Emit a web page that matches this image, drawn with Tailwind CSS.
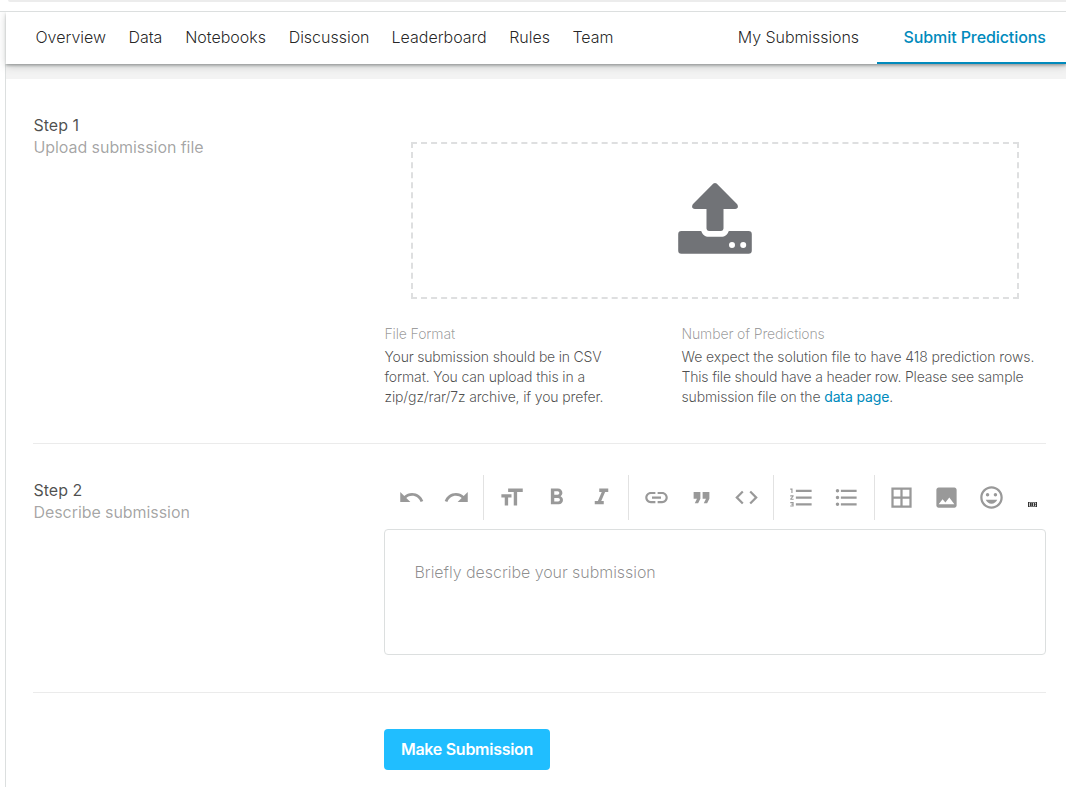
<!DOCTYPE html>
<html lang="en">
<head>
<meta charset="utf-8">
<title>Submit Predictions</title>
<script src="https://cdn.jsdelivr.net/npm/@tailwindcss/browser@4"></script>
</head>
<body class="h-[787px] overflow-hidden bg-white font-['Inter',sans-serif] font-light">
<div class="flex h-full flex-col">
  <div class="ml-2 h-[2px] shrink-0 rounded-bl bg-[#ececec]"></div>
  <div class="relative z-10 mt-[9px] h-px shrink-0 bg-[#dcdfdf]"></div>
  <div class="flex min-h-0 flex-1 flex-col pl-[5px] [clip-path:inset(0)]">
    <nav class="relative ml-px flex h-[52px] shrink-0 items-start bg-white pl-[29.500px] text-base leading-[51px] tracking-[-0.02px] text-black/87 shadow-[0_1px_0_rgba(60,64,67,0.06),0_2px_2px_rgba(60,68,67,0.28),0_2px_8px_rgba(60,68,67,0.26)]">
      <div class="flex gap-[22.500px]">
        <a>Overview</a><a>Data</a><a class="ml-[0.300px]">Notebooks</a><a class="ml-[0.300px]">Discussion</a><a class="-ml-[0.400px]">Leaderboard</a><a>Rules</a><a>Team</a>
      </div>
      <a class="ml-auto mr-[18px] tracking-[-0.07px]">My Submissions</a>
      <a class="h-[52px] w-[189px] border-b-2 border-[#008abc] pl-[26.500px] font-medium tracking-[-0.09px] text-[#008abc]">Submit Predictions</a>
    </nav>
    <main class="min-h-0 flex-1 border-l border-[#dcdfdf]">
      <div class="h-[15px] bg-[#f3f3f3]"></div>
      <div class="ml-[27px] mr-5">
        <section class="flex h-[365px] border-b border-[#ebebeb] pt-[35px]">
          <div class="w-[351px] pl-[0.500px] text-base leading-[22px]">
            <h2 class="font-normal text-black/70">Step 1</h2>
            <p class="font-normal tracking-[-0.070px] text-black/37">Upload submission file</p>
          </div>
          <div class="flex-1">
            <div class="mx-[27px] mt-7 flex h-[157px] justify-center border-2 border-dashed border-[#dedfe0] pt-[38px]">
              <svg class="h-[74px] w-[76px]" viewBox="677 182 76 74" fill="#717377">
                <path d="M713.4 183.6Q715 182.4 716.6 183.6L737.2 204.2Q739.4 208.4 735.2 209H723.5V228.6Q723.5 231 721.1 231H708.9Q706.5 231 706.5 228.6V209H694.8Q690.6 208.4 692.8 204.2Z"/>
                <path fill-rule="evenodd" d="M681.4 231H701.2C702.6 234.6 704.8 236.8 709 236.8H721C725.200 236.800 727.400 234.600 728.800 231H748.600Q751.800 231 751.800 234.200V250.600Q751.800 253.800 748.600 253.800H681.400Q678.200 253.800 678.200 250.600V234.200Q678.200 231 681.400 231ZM729 245a3 3 0 1 0 6 0a3 3 0 1 0-6 0ZM740.200 245a3 3 0 1 0 6 0a3 3 0 1 0-6 0Z"/>
              </svg>
            </div>
            <div class="flex pl-[0.500px] pt-[25px] text-sm leading-5 tracking-[-0.140px]">
              <div class="w-[297px]">
                <h3 class="mb-[3px] text-black/40">File Format</h3>
                <p class="text-black/70"><span class="tracking-[-0.200px]">Your submission should be in CSV</span><br>format. You can upload this in a<br>zip/gz/rar/7z archive, if you prefer.</p>
              </div>
              <div class="flex-1 whitespace-nowrap">
                <h3 class="mb-[3px] text-black/40">Number of Predictions</h3>
                <p class="text-black/70"><span class="tracking-[-0.090px]">We expect the solution file to have 418 prediction rows.</span><br><span class="tracking-[-0.190px]">This file should have a header row. Please see sample</span><br>submission file on the <a class="font-normal text-[#008abc]">data page</a>.</p>
              </div>
            </div>
          </div>
        </section>
        <section class="flex h-[249px] border-b border-[#ebebeb]">
          <div class="w-[351px] pl-[0.500px] pt-[35px] text-base leading-[22px]">
            <h2 class="font-normal text-black/70">Step 2</h2>
            <p class="font-normal tracking-[-0.070px] text-black/37">Describe submission</p>
          </div>
          <div class="flex-1 pt-[31px]">
            <div class="flex h-[45px] items-center pl-[4.500px] text-[#999] [&_svg]:mx-[9px] [&_svg]:size-[27px] [&_svg]:shrink-0 [&_svg]:fill-current">
              <svg viewBox="0 0 24 24"><path d="M12.500 8c-2.650 0-5.050.99-6.900 2.600L2 7v9h9l-3.620-3.620c1.390-1.160 3.160-1.880 5.120-1.880 3.540 0 6.550 2.310 7.600 5.500l2.370-.780C21.080 11.030 17.150 8 12.500 8z"/></svg>
              <svg viewBox="0 0 24 24"><path d="M18.400 10.600C16.550 8.990 14.150 8 11.500 8c-4.650 0-8.580 3.030-9.960 7.220L3.900 16c1.050-3.190 4.050-5.500 7.600-5.500 1.950 0 3.730.72 5.120 1.880L13 16h9V7l-3.600 3.600z"/></svg>
              <i class="ml-[4px] mr-[5px] h-full w-px bg-[#e2e2e2]"></i>
              <svg viewBox="0 0 24 24"><path d="M9 4v3h5v12h3V7h5V4H9zm-6 8h3v7h3v-7h3V9H3v3z"/></svg>
              <svg viewBox="0 0 24 24"><path d="M15.600 10.790c.97-.67 1.650-1.770 1.650-2.790 0-2.260-1.750-4-4-4H7v14h7.040c2.090 0 3.710-1.700 3.710-3.790 0-1.520-.86-2.820-2.150-3.420zM10 6.500h3c.83 0 1.500.67 1.500 1.500s-.67 1.500-1.500 1.500h-3v-3zm3.500 9H10v-3h3.500c.83 0 1.500.67 1.500 1.500s-.67 1.500-1.500 1.500z"/></svg>
              <svg viewBox="0 0 24 24"><path d="M10 4v3h2.210l-3.420 8H6v3h8v-3h-2.210l3.420-8H18V4z"/></svg>
              <i class="mx-[4.500px] h-full w-px bg-[#e2e2e2]"></i>
              <svg viewBox="0 0 24 24"><path d="M3.900 12c0-1.710 1.390-3.100 3.100-3.100h4V7H7c-2.760 0-5 2.240-5 5s2.240 5 5 5h4v-1.900H7c-1.710 0-3.100-1.390-3.100-3.100zM8 13h8v-2H8v2zm9-6h-4v1.900h4c1.710 0 3.100 1.390 3.100 3.100s-1.390 3.100-3.100 3.100h-4V17h4c2.760 0 5-2.240 5-5s-2.240-5-5-5z"/></svg>
              <svg viewBox="0 0 24 24"><path d="M6 17h3l2-4V7H5v6h3zm8 0h3l2-4V7h-6v6h3z"/></svg>
              <svg viewBox="0 0 24 24"><path d="M9.400 16.600L4.800 12l4.600-4.600L8 6l-6 6 6 6 1.400-1.400zm5.200 0l4.600-4.600-4.600-4.600L16 6l6 6-6 6-1.400-1.400z"/></svg>
              <i class="mx-[4.500px] h-full w-px bg-[#e2e2e2]"></i>
              <svg viewBox="0 0 24 24"><path d="M2 17h2v.5H3v1h1v.5H2v1h3v-4H2v1zm1-9h1V4H2v1h1v3zm-1 3h1.800L2 13.100v.9h3v-1H3.200L5 10.900V10H2v1zm5-6v2h14V5H7zm0 14h14v-2H7v2zm0-6h14v-2H7v2z"/></svg>
              <svg viewBox="0 0 24 24"><path d="M4 10.500c-.83 0-1.500.67-1.500 1.500s.67 1.500 1.500 1.500 1.500-.67 1.500-1.500-.67-1.500-1.500-1.500zm0-6c-.83 0-1.500.67-1.500 1.500S3.170 7.500 4 7.500 5.500 6.830 5.500 6 4.830 4.500 4 4.500zm0 12c-.83 0-1.500.68-1.500 1.500s.68 1.500 1.500 1.500 1.500-.68 1.500-1.500-.67-1.500-1.500-1.500zM7 19h14v-2H7v2zm0-6h14v-2H7v2zm0-8v2h14V5H7z"/></svg>
              <i class="ml-[5px] mr-[4px] h-full w-px bg-[#e2e2e2]"></i>
              <svg viewBox="0 0 24 24"><path d="M3 3v18h18V3H3zm8 16H5v-6h6v6zm0-8H5V5h6v6zm8 8h-6v-6h6v6zm0-8h-6V5h6v6z"/></svg>
              <svg viewBox="0 0 24 24"><path d="M21 19V5c0-1.100-.9-2-2-2H5c-1.100 0-2 .9-2 2v14c0 1.100.9 2 2 2h14c1.100 0 2-.9 2-2zM8.500 13.500l2.500 3.010L14.500 12l4.500 6H5l3.500-4.500z"/></svg>
              <svg viewBox="0 0 24 24"><path d="M11.990 2C6.470 2 2 6.480 2 12s4.470 10 9.990 10C17.520 22 22 17.520 22 12S17.520 2 11.990 2zM12 20c-4.420 0-8-3.580-8-8s3.580-8 8-8 8 3.580 8 8-3.580 8-8 8zm3.500-9c.83 0 1.500-.67 1.500-1.500S16.330 8 15.500 8 14 8.670 14 9.500s.67 1.500 1.500 1.500zm-7 0c.83 0 1.500-.67 1.500-1.500S9.330 8 8.500 8 7 8.670 7 9.500 7.670 11 8.500 11zm3.500 6.500c2.330 0 4.310-1.460 5.110-3.500H6.890c.8 2.040 2.780 3.500 5.110 3.500z"/></svg>
              <span class="ml-[14px] mt-[14px] flex h-[5px] w-[9px] [&>svg]:mx-0! [&>svg]:h-[5px]! [&>svg]:w-[9px]!"><svg viewBox="0 0 9 5"><path fill="#777" d="M0 0h9v5H0z"/><path fill="#333" d="M0 0h1v5H0zM8 0h1v5H8zM2 1h1v3H2zM4 1h1v3H4zM6 1h1v3H6z"/><path fill="#ccc" d="M1 1h1v3H1zM5 1h1v3H5zM7 1h1v1H7zM7 3h1v1H7z"/></svg></span>
            </div>
            <div class="mt-[9px] h-[126px] rounded border border-[#dcdfdf] px-[29.500px] pt-[31px] text-base leading-[22px] tracking-[-0.060px] text-black/45">Briefly describe your submission</div>
          </div>
        </section>
        <button class="ml-[351px] mt-9 block h-[41px] w-[166px] rounded bg-[#20beff] pb-0.5 text-base font-semibold tracking-[-0.270px] text-white">Make Submission</button>
      </div>
    </main>
  </div>
</div>
</body>
</html>
